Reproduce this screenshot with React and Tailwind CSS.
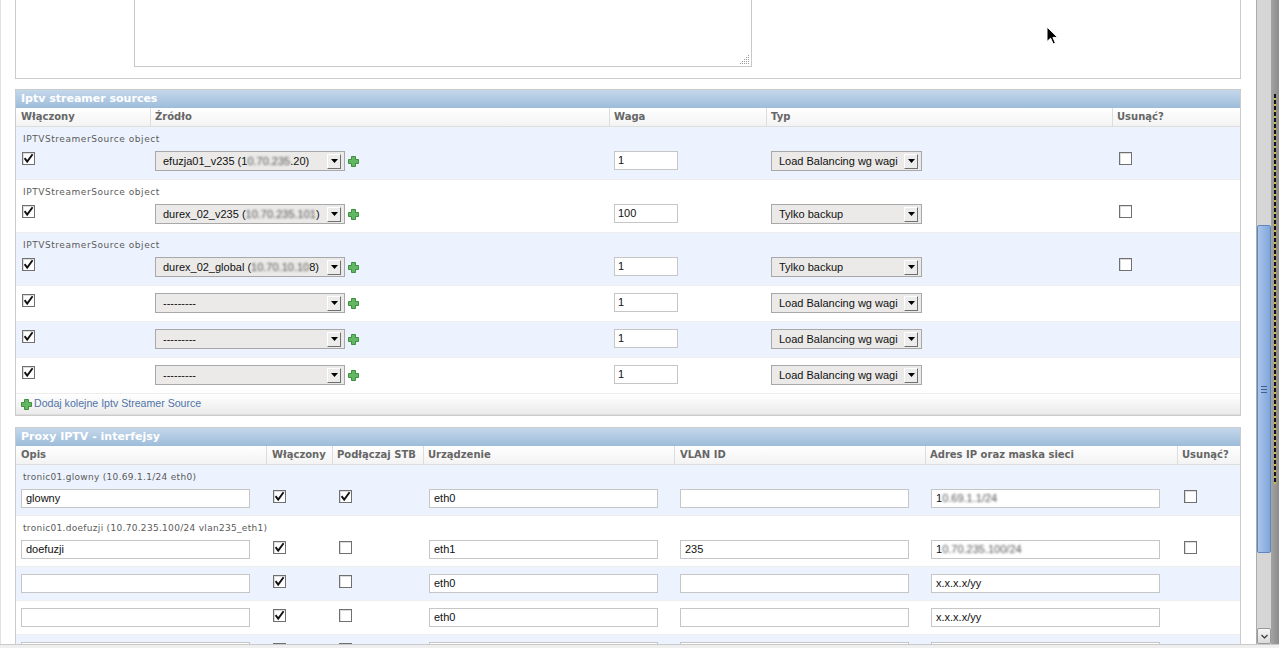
import React from "react";

const DJ = "font-['DejaVu_Sans',sans-serif]";
const C2 = "grid grid-cols-[134px_459px_157px_346px_128px]";
const C3 = "grid grid-cols-[250px_66px_91px_251px_251px_252px_63px]";

function Check({ checked }) {
  return (
    <span className="inline-flex w-[13px] h-[13px] border border-[#707070] bg-white shadow-[inset_1px_1px_0_#dcdcdc] items-center justify-center">
      {checked && (
        <svg width="11" height="11" viewBox="0 0 11 11">
          <path d="M1.6 5.2 L4.2 8.6 L9.6 1.2" fill="none" stroke="#111" strokeWidth="1.9" />
        </svg>
      )}
    </span>
  );
}

function Plus() {
  return (
    <svg width="11" height="11" viewBox="0 0 11 11" className="block">
      <path
        d="M3.5 0.5 H7.5 V3.5 H10.5 V7.5 H7.5 V10.5 H3.5 V7.5 H0.5 V3.5 H3.5 Z"
        fill="#62b862"
        stroke="#3e8f3e"
        strokeWidth="1"
      />
    </svg>
  );
}

function Select({ w, children }) {
  return (
    <div
      className={`${w} h-[20px] border border-[#a8a8a8] bg-[#ebeae8] flex items-center justify-between pl-[7px] pr-[3px] text-[11px] text-[#111]`}
    >
      <span className="whitespace-nowrap overflow-hidden">{children}</span>
      <span className="w-[14px] h-[15px] shrink-0 bg-[#ececec] border-t border-l border-t-white border-l-white border-b border-r border-b-[#707070] border-r-[#707070] flex items-center justify-center">
        <svg width="7" height="4" viewBox="0 0 7 4">
          <path d="M0 0 H7 L3.5 4 Z" fill="#000" />
        </svg>
      </span>
    </div>
  );
}

function Input({ w, v, pl = "pl-[4px]" }) {
  return (
    <div
      className={`${w} h-[19px] border border-[#c6c6c6] bg-white flex items-center ${pl} text-[11px] text-[#111] whitespace-nowrap overflow-hidden`}
    >
      {v}
    </div>
  );
}

function Blur({ children }) {
  return <span className="blur-[1px] text-[#555]">{children}</span>;
}

function SectionTitle({ children }) {
  return (
    <div
      className={`h-[18px] bg-linear-to-b from-[#c4d7eb] to-[#9dbcda] pl-[5px] text-[11px] leading-[18px] font-bold text-white ${DJ}`}
    >
      {children}
    </div>
  );
}

function SrcRow({ bg, label, src, waga, typ, remove }) {
  return (
    <div className={`${bg} border-b border-[#eeeeee]`}>
      {label && (
        <div className={`h-[24px] pl-[7px] pt-[6px] text-[9px] leading-[12px] tracking-[0.55px] text-[#5a5a5a] ${DJ}`}>
          {label}
        </div>
      )}
      <div className={`${C2} ${label ? "pb-[8px]" : "pt-[7px] pb-[8px]"}`}>
        <div className="pl-[6px] pt-[1px] flex">
          <Check checked />
        </div>
        <div className="pl-[5px] flex items-center">
          <Select w="w-[190px]">{src}</Select>
          <span className="ml-[3px]">
            <Plus />
          </span>
        </div>
        <div className="pl-[5px]">
          <Input w="w-[64px]" v={waga} pl="pl-[3px]" />
        </div>
        <div className="pl-[5px]">
          <Select w="w-[151px]">{typ}</Select>
        </div>
        <div className="pl-[7px] pt-[1px] flex">{remove && <Check />}</div>
      </div>
    </div>
  );
}

function ProxyRow({ bg, label, opis, wl, stb, dev, vlan, ip, remove }) {
  return (
    <div className={`${bg} border-b border-[#eeeeee]`}>
      {label && (
        <div className={`h-[24px] pl-[7px] pt-[6px] text-[9px] leading-[12px] tracking-[0.3px] text-[#5a5a5a] ${DJ}`}>
          {label}
        </div>
      )}
      <div className={`${C3} ${label ? "pb-[7px]" : "pt-[7px] pb-[7px]"}`}>
        <div className="pl-[5px]">
          <Input w="w-[229px]" v={opis} />
        </div>
        <div className="pl-[7px] pt-[1px] flex">
          <Check checked={wl} />
        </div>
        <div className="pl-[7px] pt-[1px] flex">
          <Check checked={stb} />
        </div>
        <div className="pl-[6px]">
          <Input w="w-[229px]" v={dev} />
        </div>
        <div className="pl-[6px]">
          <Input w="w-[229px]" v={vlan} />
        </div>
        <div className="pl-[6px]">
          <Input w="w-[229px]" v={ip} />
        </div>
        <div className="pl-[7px] pt-[1px] flex">{remove && <Check />}</div>
      </div>
    </div>
  );
}

const TH = `h-[18px] leading-[18px] text-[10px] font-bold text-[#666] whitespace-nowrap ${DJ}`;

export default function App() {
  const blue = "bg-[#edf3fe]";
  const white = "bg-white";
  return (
    <div className="relative w-[1279px] h-[648px] overflow-hidden bg-white flex flex-col font-['Liberation_Sans',Arial,sans-serif]">
      <div className="flex h-[644px]">
        {/* main area */}
        <div className="w-[1256px] h-full overflow-hidden border-l border-[#e2e2e2] pl-[14px]">
          {/* top fieldset with textarea */}
          <div className="w-[1226px] h-[79px] border-x border-b border-[#cccccc] pl-[118px]">
            <div className="w-[618px] h-[67px] border-x border-b border-[#c8c8c8] flex items-end justify-end">
              <svg width="11" height="11" viewBox="0 0 11 11" className="mb-[1px] mr-[1px]">
                <g fill="#9a9a9a">
                  <rect x="9" y="1" width="1" height="1" />
                  <rect x="7" y="3" width="1" height="1" />
                  <rect x="9" y="3" width="1" height="1" />
                  <rect x="5" y="5" width="1" height="1" />
                  <rect x="7" y="5" width="1" height="1" />
                  <rect x="9" y="5" width="1" height="1" />
                  <rect x="3" y="7" width="1" height="1" />
                  <rect x="5" y="7" width="1" height="1" />
                  <rect x="7" y="7" width="1" height="1" />
                  <rect x="9" y="7" width="1" height="1" />
                  <rect x="1" y="9" width="1" height="1" />
                  <rect x="3" y="9" width="1" height="1" />
                  <rect x="5" y="9" width="1" height="1" />
                  <rect x="7" y="9" width="1" height="1" />
                  <rect x="9" y="9" width="1" height="1" />
                </g>
              </svg>
            </div>
          </div>

          {/* Iptv streamer sources */}
          <div className="w-[1226px] mt-[10px] border border-[#cccccc]">
            <SectionTitle>Iptv streamer sources</SectionTitle>
            <div className={`${C2} bg-linear-to-b from-white to-[#f3f3f3] border-b border-[#dddddd]`}>
              <div className={`${TH} pl-[5px]`}>Włączony</div>
              <div className={`${TH} pl-[4px] border-l border-[#dddddd]`}>Źródło</div>
              <div className={`${TH} pl-[4px] border-l border-[#dddddd]`}>Waga</div>
              <div className={`${TH} pl-[4px] border-l border-[#dddddd]`}>Typ</div>
              <div className={`${TH} pl-[4px] border-l border-[#dddddd]`}>Usunąć?</div>
            </div>
            <SrcRow
              bg={blue}
              label="IPTVStreamerSource object"
              src={
                <>
                  efuzja01_v235 (1<Blur>0.70.235</Blur>.20)
                </>
              }
              waga="1"
              typ="Load Balancing wg wagi"
              remove
            />
            <SrcRow
              bg={white}
              label="IPTVStreamerSource object"
              src={
                <>
                  durex_02_v235 (<Blur>10.70.235.101</Blur>)
                </>
              }
              waga="100"
              typ="Tylko backup"
              remove
            />
            <SrcRow
              bg={blue}
              label="IPTVStreamerSource object"
              src={
                <>
                  durex_02_global (<Blur>10.70.10.10</Blur>8)
                </>
              }
              waga="1"
              typ="Tylko backup"
              remove
            />
            <SrcRow bg={white} src="---------" waga="1" typ="Load Balancing wg wagi" />
            <SrcRow bg={blue} src="---------" waga="1" typ="Load Balancing wg wagi" />
            <SrcRow bg={white} src="---------" waga="1" typ="Load Balancing wg wagi" />
            <div className="h-[21px] bg-linear-to-b from-white to-[#ebebeb] flex items-center pl-[5px] gap-[2px] text-[10.6px] text-[#4f74a8] border-b border-[#dddddd]">
              <Plus />
              <span>Dodaj kolejne Iptv Streamer Source</span>
            </div>
          </div>

          {/* Proxy IPTV - interfejsy */}
          <div className="w-[1226px] mt-[11px] border border-[#cccccc]">
            <SectionTitle>Proxy IPTV - interfejsy</SectionTitle>
            <div className={`${C3} bg-linear-to-b from-white to-[#f3f3f3] border-b border-[#dddddd]`}>
              <div className={`${TH} pl-[5px]`}>Opis</div>
              <div className={`${TH} pl-[5px] border-l border-[#dddddd]`}>Włączony</div>
              <div className={`${TH} pl-[4px] border-l border-[#dddddd]`}>Podłączaj STB</div>
              <div className={`${TH} pl-[4px] border-l border-[#dddddd]`}>Urządzenie</div>
              <div className={`${TH} pl-[5px] border-l border-[#dddddd]`}>VLAN ID</div>
              <div className={`${TH} pl-[4px] border-l border-[#dddddd]`}>Adres IP oraz maska sieci</div>
              <div className={`${TH} pl-[4px] border-l border-[#dddddd]`}>Usunąć?</div>
            </div>
            <ProxyRow
              bg={blue}
              label="tronic01.glowny (10.69.1.1/24 eth0)"
              opis="glowny"
              wl
              stb
              dev="eth0"
              vlan=""
              ip={
                <>
                  1<Blur>0.69.1.1/24</Blur>
                </>
              }
              remove
            />
            <ProxyRow
              bg={white}
              label="tronic01.doefuzji (10.70.235.100/24 vlan235_eth1)"
              opis="doefuzji"
              wl
              dev="eth1"
              vlan="235"
              ip={
                <>
                  1<Blur>0.70.235.100/24</Blur>
                </>
              }
              remove
            />
            <ProxyRow bg={blue} opis="" wl dev="eth0" vlan="" ip="x.x.x.x/yy" />
            <ProxyRow bg={white} opis="" wl dev="eth0" vlan="" ip="x.x.x.x/yy" />
            <ProxyRow bg={blue} opis="" wl dev="eth0" vlan="" ip="x.x.x.x/yy" />
          </div>
        </div>

        {/* scrollbar */}
        <div className="w-[15px] h-full bg-[#d6d6d6] border-l border-[#ababab] flex flex-col">
          <div className="h-[225px]" />
          <div className="h-[328px] bg-linear-to-r from-[#a9c5eb] to-[#80a6da] border border-[#5f86c0] rounded-[2px] flex items-center justify-center">
            <svg width="6" height="7" viewBox="0 0 6 7">
              <g fill="#3f5f8f">
                <rect x="0" y="0" width="6" height="1" />
                <rect x="0" y="3" width="6" height="1" />
                <rect x="0" y="6" width="6" height="1" />
              </g>
            </svg>
          </div>
          <div className="flex-1" />
          <div className="h-[16px] border border-[#9a9a9a] bg-linear-to-b from-[#f6f6f6] to-[#dadada] rounded-[2px] flex items-center justify-center">
            <svg width="7" height="5" viewBox="0 0 7 5">
              <path d="M0.5 1 L3.5 4 L6.5 1" fill="none" stroke="#333" strokeWidth="1.2" />
            </svg>
          </div>
        </div>
        <div className="w-[8px] h-full bg-linear-to-r from-[#a4a4a4] to-[#8c8c8c] flex justify-center">
          <div className="mt-[94px] w-[2px] h-[390px] bg-[repeating-linear-gradient(to_bottom,#111_0_4px,#cdbb42_4px_6px)]" />
        </div>
      </div>
      {/* bottom status strip */}
      <div className="h-[4px] border-t border-[#c9c9c9] bg-[#efefef]" />

      {/* mouse cursor */}
      <svg
        width="13"
        height="20"
        viewBox="0 0 13 20"
        className="absolute left-[1046px] top-[26px]"
      >
        <path
          d="M1 1 L1 15.5 L4.6 12.2 L7.2 18 L9.4 17 L6.9 11.4 L11.6 11.4 Z"
          fill="#000"
          stroke="#fff"
          strokeWidth="1"
          strokeLinejoin="round"
        />
      </svg>
    </div>
  );
}
